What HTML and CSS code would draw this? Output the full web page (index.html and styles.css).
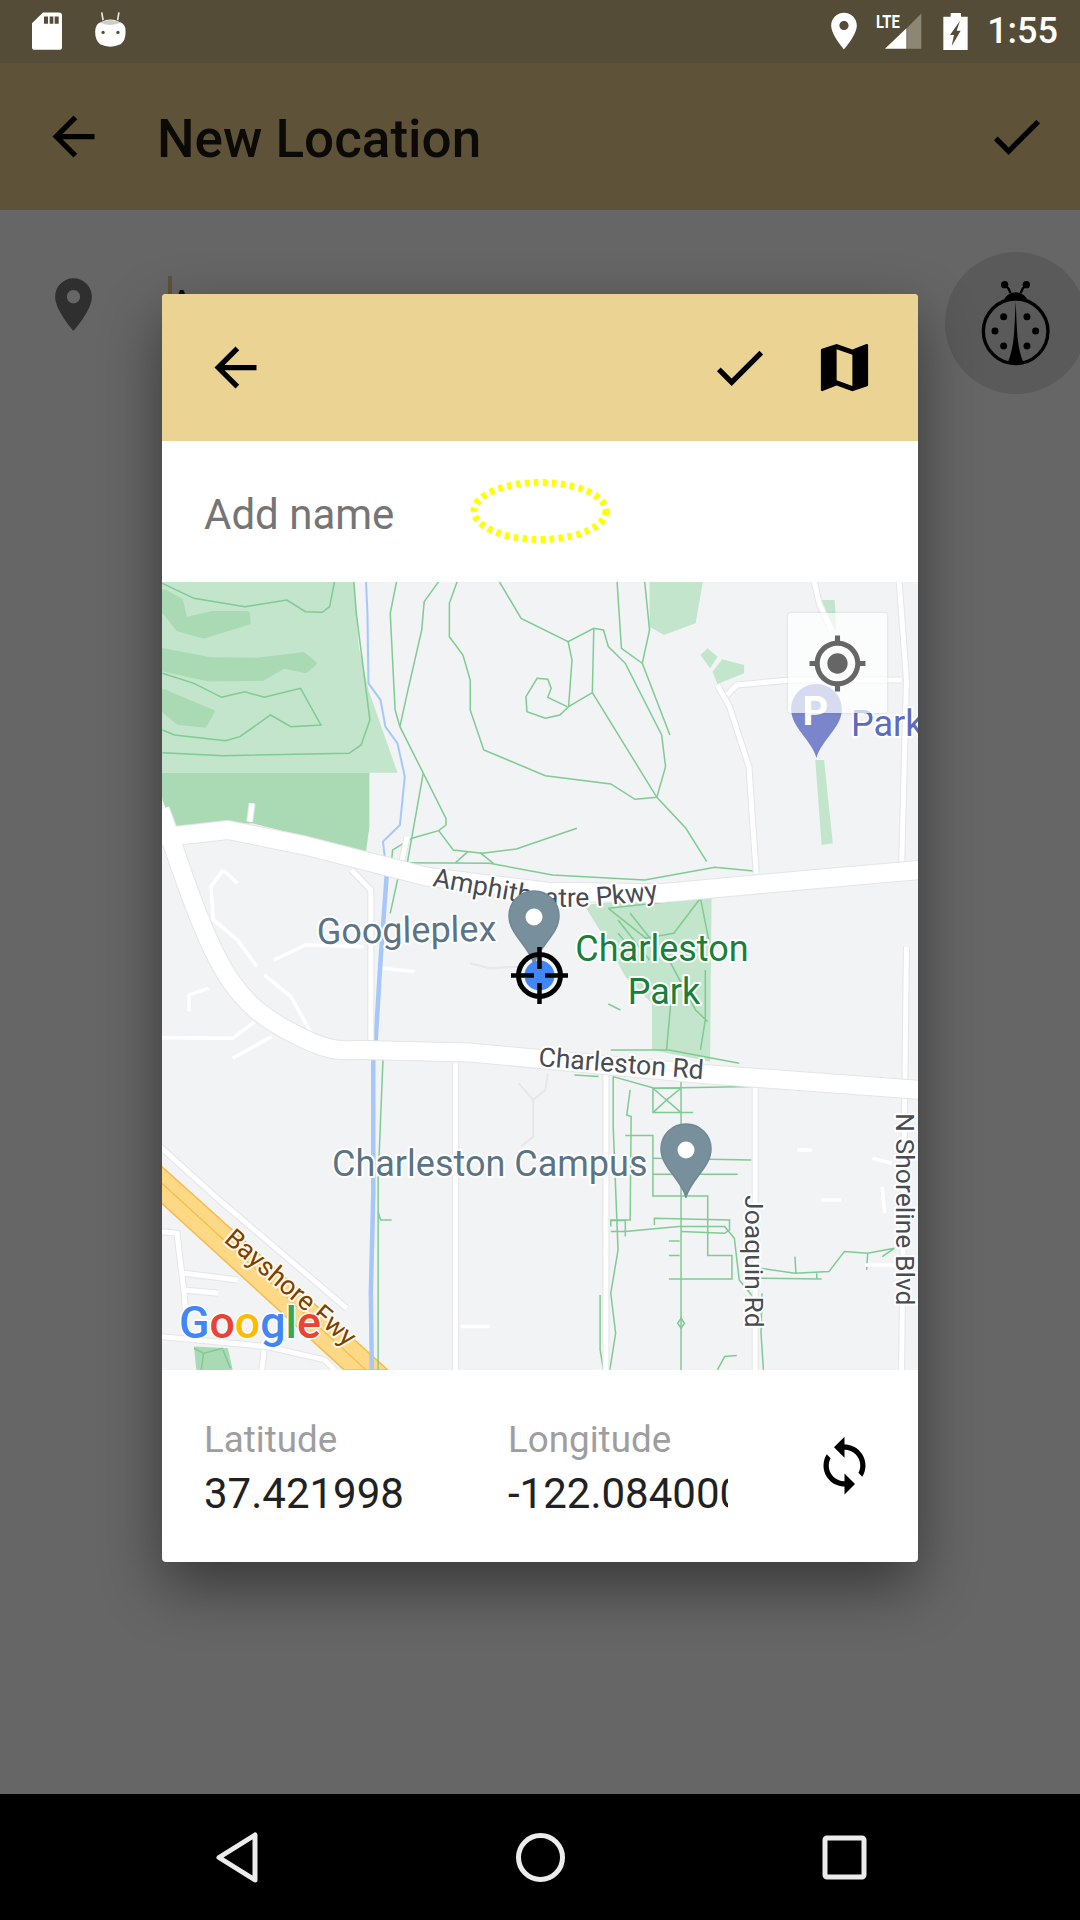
FILE: index.html
```html
<!DOCTYPE html>
<html lang="en">
<head>
<meta charset="utf-8">
<title>New Location</title>
<link rel="stylesheet" href="styles.css">
</head>
<body>
<div class="screen">
  <div class="statusbar">
    <svg class="st-sd" viewBox="97 37 90 113"><path fill="#fff" d="M130 38H178Q187 38 187 47V143Q187 150 178 150H105Q97 150 97 143V70Z"/><path fill="#544c36" d="M133 50h12v22h-12zM150 50h11v22h-11zM165 50h12v22h-12z"/></svg>
    <svg class="st-cat" viewBox="285 32 93 106"><path stroke="#e8e6e0" stroke-width="5" d="M305 33l4 24M357 33l-4 24"/><path fill="#fff" d="M305 62Q331 48 358 62Q378 66 377 92Q378 118 362 130Q331 144 300 130Q285 118 285 92Q285 66 305 62Z"/><path fill="#cfcdc5" d="M298 64Q331 48 364 64Q331 78 298 64Z"/><circle cx="309" cy="94" r="5" fill="#544c36"/><circle cx="354" cy="94" r="5" fill="#544c36"/></svg>
    <div class="st-right">
      <svg class="st-loc" viewBox="0 0 24 24"><path fill="#fff" d="M12 2C8.13 2 5 5.13 5 9c0 5.25 7 13 7 13s7-7.75 7-13c0-3.87-3.13-7-7-7zm0 9.5c-1.38 0-2.5-1.12-2.5-2.5s1.12-2.5 2.5-2.5 2.5 1.12 2.5 2.5-1.12 2.5-2.5 2.5z"/></svg>
      <svg class="st-sig" viewBox="225 36 142 114"><path fill="#fff" d="M255 147L320 85V147Z"/><path fill="#8c8675" d="M322 83L365 40V147H322Z"/><text class="st-lte" x="228" y="85" textLength="72" lengthAdjust="spacingAndGlyphs">LTE</text></svg>
      <svg class="st-bat" viewBox="430 37 73 111"><path fill="#fff" d="M452 37h31v11h20v100h-73V48h22z"/><path fill="#544c36" d="M480 60L450 103h12l-7 33 27-46h-12z"/></svg>
      <span class="st-time">1:55</span>
    </div>
  </div>

  <div class="main">
    <header class="appbar">
      <svg class="icon" viewBox="0 0 24 24"><path d="M20 11H7.83l5.59-5.59L12 4l-8 8 8 8 1.41-1.41L7.83 13H20v-2z"/></svg>
      <h1 class="appbar-title">New Location</h1>
      <svg class="icon" viewBox="0 0 24 24"><path d="M9 16.17L4.83 12l-1.42 1.41L9 19 21 7l-1.41-1.41z"/></svg>
    </header>
    <div class="form-row">
      <svg class="icon form-pin" viewBox="0 0 24 24"><path d="M12 2C8.13 2 5 5.13 5 9c0 5.25 7 13 7 13s7-7.75 7-13c0-3.87-3.13-7-7-7zm0 9.5c-1.38 0-2.5-1.12-2.5-2.5s1.12-2.5 2.5-2.5 2.5 1.12 2.5 2.5-1.12 2.5-2.5 2.5z"/></svg>
      <div class="form-field"><span class="cursor"></span><span class="field-text">A</span></div>
      <div class="bug-badge">
        <svg class="bug" viewBox="180 115 220 270">
          <circle cx="290" cy="275" r="97" fill="none" stroke="#000" stroke-width="10"/>
          <path d="M290 185C286 260 288 320 266 370Q290 382 314 370C292 320 294 260 290 185Z"/>
          <path d="M250 190Q262 158 290 158Q318 158 330 190Q290 170 250 190Z"/>
          <path d="M275 160Q270 145 257 135M305 160Q310 145 322 135" fill="none" stroke="#000" stroke-width="7"/>
          <circle cx="257" cy="135" r="11"/><circle cx="322" cy="135" r="11"/>
          <circle cx="254" cy="231" r="10.500"/><circle cx="324" cy="231" r="10.500"/><circle cx="228" cy="274" r="10.500"/><circle cx="350" cy="274" r="10.500"/><circle cx="254" cy="319" r="10.500"/><circle cx="324" cy="319" r="10.500"/>
        </svg>
      </div>
    </div>

    <div class="scrim">
      <section class="dialog">
        <div class="dlg-head">
          <svg class="icon" viewBox="0 0 24 24"><path d="M20 11H7.830l5.590-5.590L12 4l-8 8 8 8 1.410-1.410L7.830 13H20v-2z"/></svg>
          <svg class="icon dlg-check" viewBox="0 0 24 24"><path d="M9 16.170L4.830 12l-1.420 1.410L9 19 21 7l-1.410-1.410z"/></svg>
          <svg class="icon" viewBox="0 0 24 24"><path d="M20.500 3l-.16.03L15 5.100 9 3 3.360 4.900c-.21.07-.36.25-.36.48V20.500c0 .28.22.5.5.5l.16-.03L9 18.900l6 2.100 5.640-1.900c.21-.07.36-.25.36-.48V3.500c0-.28-.22-.5-.5-.5zM15 19l-6-2.110V5l6 2.110V19z"/></svg>
        </div>
        <div class="dlg-name">
          <span class="name-hint">Add name</span>
          <svg class="ellipse" viewBox="0 0 146 70"><ellipse cx="73" cy="35" rx="66" ry="28.500" fill="none" stroke="#ffff00" stroke-width="7" stroke-dasharray="4.500 4.500"/></svg>
        </div>
        <div class="map">
          <svg class="map-svg" viewBox="162 582 756 788" width="756" height="788">
            <defs>
              <symbol id="pin" viewBox="0 0 52 75"><path d="M26 1C12 1 1 12 1 26c0 18 20 30 25 48 5-18 25-30 25-48C51 12 40 1 26 1z"/></symbol>
              <path id="amph-path" d="M432 886L540 906Q600 910 680 895"/>
              <path id="rd-path" d="M538 1066L740 1082"/>
              <path id="fwy-path" d="M223 1241L372 1369"/>
              <path id="joaq-path" d="M745 1195L745 1369"/>
              <path id="shore-path" d="M896 1113L896 1369"/>
              <g id="minor-roads">
                <path d="M190 670L185 725M510 770L498 850"/>
                <path d="M1150 315L1175 380L1215 560L1230 880"/>
                <path d="M1170 345L1190 315L1300 300L1530 300"/>
                <path d="M1525 5L1540 300L1530 860"/>
                <path d="M1350 5L1360 70L1385 150"/>
                <path d="M395 870L435 930V1380"/>
                <path d="M610 1450V2370M920 1485V2370M1228 1520V2370"/>
                <path d="M0 1700L130 1870L385 2185"/>
                <path d="M1540 1100L1530 2370"/>
                <path d="M0 1955L35 1960L50 2140L55 2260M50 2080L160 2100M50 2130L120 2140"/>
                <path d="M0 2270L220 2300L340 2340L360 2370M215 2310L210 2370"/>
              </g>
            </defs>
            <rect class="m-land" x="162" y="582" width="756" height="788"/>
            <g transform="translate(160 580) scale(.4847 .3333)">
              <path class="g-light" d="M0 5H400L410 200L430 330L490 578H0Z"/>
              <path class="g-light" d="M1010 5H1120L1105 130L1040 165L1010 140Z"/>
              <path class="g-light" d="M1115 225L1130 205L1150 230L1135 265ZM1160 238L1205 255V280L1150 312L1140 275Z"/>
              <path class="g-light" d="M1352 540H1370L1388 790L1365 795ZM1365 60H1392L1395 150L1385 130Z"/>
              <path class="g-dark" d="M0 578H432V740L425 815L190 730L30 745L5 660Z"/>
              <path class="g-dark g-blob" d="M8 35L40 60L50 120L110 100L178 100L180 128L90 168L40 148L8 90Z"/>
              <path class="g-dark g-blob" d="M8 212L100 238L200 240L295 224L316 250L300 272L255 258L210 296L100 297L8 268Z"/>
              <path class="g-dark g-blob" d="M8 335L106 395L90 436L40 428L8 390Z"/>
              <path class="g-light" d="M875 975L1138 935L1135 1445L1015 1410V1270L960 1190L920 1080Z"/>
              <path class="g-dark" d="M70 2300L140 2305L150 2370H75Z"/>

              <path class="fwy" d="M0 1755L470 2370H380L0 1865Z"/>
              <path class="fwy-line" d="M0 1805L425 2370"/>

              <g class="green">
                <path d="M5 10L70 55L175 80L262 60L300 95L335 97L350 80L360 5"/>
                <path d="M5 280L70 310L127 352L175 335L215 352L290 325L332 435L270 440L228 405L165 470L135 482L30 465L5 450"/>
                <path d="M5 518L130 527L390 520L415 495L433 420L405 100L400 5"/>
                <path d="M488 5L475 100L485 390L495 440L590 715V735L575 752L520 775L480 810L475 880"/>
                <path d="M575 5L545 65L540 150L510 340L495 440"/>
                <path d="M613 5L597 70V170L625 225L640 300V390L668 510L795 587L930 612L980 658L1025 652L1043 560L1035 465L960 250L925 200L915 150L895 145L842 185L745 115L700 5"/>
                <path d="M842 185L850 240L843 380"/>
                <path d="M895 145L892 338L843 380L825 405L795 415L757 395L755 350L778 295L800 298L807 325L800 352L840 380"/>
                <path d="M892 338L1025 652L1085 745L1128 845"/>
                <path d="M943 5L952 205L995 250L1010 150L1000 5"/>
                <path d="M995 250L1052 465"/>
                <path d="M543 580L510 850"/>
                <path d="M575 752L605 810L665 820L735 807L860 745"/>
                <path d="M510 848L680 850L810 885L1000 900L1145 862L1225 873"/>
                <path d="M635 815L610 848M660 818L688 850"/>
                <path d="M475 1000L490 900L515 870"/>
                <path d="M925 985L1115 955L1060 1060L1000 1075M925 985L1050 1130M945 1020L1010 1140M1115 955L1135 1100M970 1000L1030 1110M945 1060L985 1130"/>
                <path d="M1050 1140L1105 1290L1130 1325M1125 1170V1320L1115 1410M1055 1250L1045 1410M930 1410H1050L1195 1450"/>
                <path d="M855 1485L905 1490M935 1490L1020 1525L1220 1520"/>
                <path d="M1017 1525H1075V1598H1017ZM1017 1525L1045 1560L1075 1525M1017 1598L1045 1560L1075 1598M1075 1598H1100M1075 1480V2370"/>
                <path d="M960 1667H1017V1848H1130V2027H1180V2097H1050"/>
                <path d="M1017 1735L1220 1740M1017 1783L1192 1783"/>
                <path d="M970 1530L963 1605L972 1610L970 1920H930V1940"/>
                <path d="M930 1922H960V1970M930 1955H960L1070 1940H1165L1185 1975L1195 2100L1240 2180"/>
                <path d="M1020 1935V1915L1175 1920V1950L1165 1960L1075 1955"/>
                <path d="M1050 1983H1072M1050 2027H1072"/>
                <path d="M1240 2065L1310 2080L1380 2075L1412 2015L1460 2020L1515 2005L1490 2030M1240 2095L1365 2097M1310 2030L1312 2080M1460 2020L1458 2070M1355 2080V2097"/>
                <path d="M935 1490V1640L945 2010L930 2140L940 2260L928 2370M908 2145V2310L915 2370"/>
                <path d="M1242 2140L1240 2260L1245 2370"/>
                <path d="M1150 2370L1165 2330L1190 2327M1075 2215L1082 2230L1075 2245L1068 2230Z"/>
                <path d="M450 1895L455 1920H478"/>
                <path d="M925 1272L950 1290"/>
                <path d="M460 1440L450 1800V2370"/>
                <path d="M70 2305L90 2320L130 2305M90 2320L85 2370M130 2310L145 2365"/>
              </g>
              <path class="stream-top" d="M425 5L428 100L430 310L455 360L465 440L490 490L505 590L495 735L460 785L468 880"/>
              <path class="stream" d="M468 880L462 1000L455 1140L445 1380L440 1440V1840L435 2140L437 2370"/>

              <use href="#minor-roads" class="road-sm-case"/>
              <use href="#minor-roads" class="road-sm"/>
              <g class="road-xs">
                <path d="M130 870L105 920L110 1020L160 1080L200 1160M130 870L160 910"/>
                <path d="M235 1140L300 1095L420 1100M460 1165L525 1175"/>
                <path d="M0 1373L150 1375L195 1325M150 1435L230 1370M215 1185L270 1250L310 1355M60 1295V1245L100 1225"/>
                <path d="M620 2240H680M1315 1710H1345M1365 1860H1405M1470 1735L1510 1750M1490 1820L1495 1900M1455 2055H1530"/>
              </g>
              <path class="road-case" d="M0 690C30 800 70 1000 120 1140S230 1330 295 1375S380 1410 420 1410L640 1418L940 1458L1120 1482L1568 1530"/>
              <path class="road-case" d="M0 770L30 768L140 750L300 797L550 890L800 935L1033 940L1240 912L1568 870"/>
              <path class="road-lg" d="M0 690C30 800 70 1000 120 1140S230 1330 295 1375S380 1410 420 1410L640 1418L940 1458L1120 1482L1568 1530"/>
              <path class="road-lg" d="M0 770L30 768L140 750L300 797L550 890L800 935L1033 940L1240 912L1568 870"/>
              <path class="faint" d="M740 1510L770 1560V1670L745 1700M800 1480L795 1530L770 1560M640 1150L680 1165L740 1160"/>
            </g>

            <use href="#pin" class="pin-p" x="790" y="683" width="53" height="76"/>
            <text class="lbl lbl-p" x="815.500" y="725" text-anchor="middle">P</text>
            <text class="lbl lbl-blue" x="851" y="736">Park</text>

            <text class="lbl lbl-road"><textPath href="#amph-path">Amphitheatre Pkwy</textPath></text>
            <text class="lbl lbl-road"><textPath href="#rd-path">Charleston Rd</textPath></text>
            <text class="lbl lbl-road"><textPath href="#joaq-path">Joaquin Rd</textPath></text>
            <text class="lbl lbl-road"><textPath href="#shore-path">N Shoreline Blvd</textPath></text>
            <text class="lbl lbl-fwy"><textPath href="#fwy-path">Bayshore Fwy</textPath></text>
            <text class="lbl lbl-poi" x="317" y="944" transform="rotate(-1 317 944)">Googleplex</text>
            <text class="lbl lbl-poi" x="332" y="1176">Charleston Campus</text>
            <text class="lbl lbl-green" x="662" y="961" text-anchor="middle"><tspan x="662">Charleston</tspan><tspan x="664" dy="43">Park</tspan></text>

            <use href="#pin" class="pin-grey" x="508" y="890" width="52" height="75"/>
            <circle cx="534" cy="917" r="8.500" fill="#fff"/>
            <use href="#pin" class="pin-grey" x="660" y="1123" width="52" height="75"/>
            <circle cx="686" cy="1150" r="8.500" fill="#fff"/>

            <circle cx="539.500" cy="975.500" r="15" fill="#4285f4"/>
            <circle cx="539.500" cy="975.500" r="21" fill="none" stroke="#000" stroke-width="5"/>
            <path d="M511 975.500h23M545 975.500h23M539.500 947v22M539.500 983v21" stroke="#000" stroke-width="4.500" fill="none"/>

            <text class="g-logo" x="179" y="1338" textLength="142" lengthAdjust="spacingAndGlyphs"><tspan fill="#4285f4">G</tspan><tspan fill="#ea4335">o</tspan><tspan fill="#fbbc05">o</tspan><tspan fill="#4285f4">g</tspan><tspan fill="#34a853">l</tspan><tspan fill="#ea4335">e</tspan></text>
          </svg>
          <div class="loc-btn">
            <svg class="loc-icon" viewBox="0 0 24 24"><path d="M12 8c-2.210 0-4 1.790-4 4s1.790 4 4 4 4-1.790 4-4-1.790-4-4-4zm8.940 3c-.46-4.170-3.770-7.480-7.940-7.940V1h-2v2.060C6.830 3.520 3.520 6.830 3.060 11H1v2h2.060c.46 4.170 3.770 7.480 7.940 7.940V23h2v-2.060c4.170-.46 7.480-3.770 7.940-7.940H23v-2h-2.060zM12 19c-3.870 0-7-3.130-7-7s3.130-7 7-7 7 3.130 7 7-3.130 7-7 7z"/></svg>
          </div>
        </div>
        <div class="dlg-foot">
          <div class="coord coord-lat"><span class="coord-label">Latitude</span><span class="coord-value">37.421998</span></div>
          <div class="coord coord-lng"><span class="coord-label">Longitude</span><span class="coord-value">-122.084000</span></div>
          <svg class="icon sync" viewBox="0 0 24 24"><path d="M12 4V1L8 5l4 4V6c3.310 0 6 2.690 6 6 0 1.010-.25 1.970-.7 2.800l1.460 1.460C19.540 15.030 20 13.570 20 12c0-4.420-3.580-8-8-8zm0 14c-3.310 0-6-2.690-6-6 0-1.010.25-1.970.7-2.800L5.240 7.740C4.460 8.970 4 10.430 4 12c0 4.420 3.580 8 8 8v3l4-4-4-4v3z"/></svg>
        </div>
      </section>
    </div>
  </div>

  <nav class="navbar">
    <svg class="nav-ico" viewBox="0 0 63 63"><path d="M50 9V54L14 31.500Z"/></svg>
    <svg class="nav-ico" viewBox="0 0 63 63"><circle cx="31.500" cy="31.500" r="22"/></svg>
    <svg class="nav-ico" viewBox="0 0 63 63"><rect x="12" y="12" width="39" height="39" rx="2"/></svg>
  </nav>
</div>
</body>
</html>
```

FILE: styles.css
```css
* { box-sizing: border-box; }
html, body { margin: 0; padding: 0; background: #000; }
.screen {
  width: 1080px; height: 1920px; overflow: hidden;
  display: flex; flex-direction: column;
  font-family: Roboto, "Liberation Sans", sans-serif;
}

/* status bar */
.statusbar { height: 63px; flex: none; background: #544c36; display: flex; align-items: center; padding: 0 22px 0 32px; }
.st-sd { width: 30px; height: 38px; margin-top: -1px; }
.st-cat { width: 31px; height: 35px; margin: -5px 0 0 33px; }
.st-right { margin-left: auto; display: flex; align-items: center; }
.st-loc { width: 44px; height: 44px; margin-top: -2px; }
.st-sig { width: 47px; height: 38px; margin: -1px 0 0 9px; }
.st-lte { font: 700 58px Roboto, sans-serif; fill: #fff; }
.st-bat { width: 25px; height: 37px; margin: -1px 0 0 21px; }
.st-time { font-size: 36px; font-weight: 500; color: #fff; margin-left: 19px; line-height: 63px; }

/* page under the dialog */
.main { position: relative; flex: 1; background: #fff; }
.icon { width: 63px; height: 63px; flex: none; display: block; fill: #000; }
.appbar { height: 147px; background: #ebcf8f; display: flex; align-items: center; padding: 0 32px 0 42px; }
.appbar-title { flex: 1; margin: 6px 0 0 52px; font-size: 53px; font-weight: 500; color: rgba(0, 0, 0, .87); line-height: 1; }
.form-row { display: flex; align-items: flex-start; padding: 42px 0 0 42px; }
.form-pin { margin-top: 21px; fill: #757575; }
.form-field { position: relative; flex: 1; margin-left: 63px; height: 60px; margin-top: 24px; }
.cursor { position: absolute; left: 0; top: 0; width: 4px; height: 60px; background: #ebcf8f; }
.field-text { position: absolute; left: 0; top: 5px; font-size: 42px; color: #212121; line-height: 49px; }
.bug-badge { width: 142px; height: 142px; flex: none; margin-right: -7px; border-radius: 50%; background: rgba(0, 0, 0, .12); display: flex; align-items: center; justify-content: center; }
.bug { width: 73.300px; height: 90px; fill: #000; }

/* dialog */
.scrim { position: absolute; inset: 0; padding-bottom: 1px; background: rgba(0, 0, 0, .6); display: flex; align-items: center; justify-content: center; }
.dialog { width: 756px; height: 1268px; border-radius: 4px; overflow: hidden; background: #fff; display: flex; flex-direction: column; box-shadow: 0 24px 60px rgba(0, 0, 0, .45); }
.dlg-head { height: 147px; flex: none; background: #ead393; display: flex; align-items: center; padding: 0 42px; gap: 42px; }
.dlg-check { margin-left: auto; }
.dlg-name { position: relative; height: 141px; flex: none; display: flex; align-items: center; padding: 0 0 0 42px; }
.name-hint { font-size: 42px; color: #757575; margin-top: 5px; }
.ellipse { position: absolute; left: 305px; top: 35px; width: 146px; height: 70px; }

/* map */
.map { position: relative; height: 788px; flex: none; overflow: hidden; }
.map-svg { display: block; }
.m-land { fill: #f1f3f4; }
.g-light { fill: #c2e5cb; }
.g-dark { fill: #a9dab4; }
.g-blob { stroke: #a9dab4; stroke-width: 14; stroke-linejoin: round; }
.green path, .stream, .stream-top, #minor-roads path, .road-xs path, .road-lg, .road-case, .fwy, .fwy-line, .faint { vector-effect: non-scaling-stroke; fill: none; }
.green path { stroke: #7fcb93; stroke-width: 1.500px; }
.stream-top { stroke: #a7c7fb; stroke-width: 2px; }
.stream { stroke: #a7c7fb; stroke-width: 4.500px; }
.road-sm-case { stroke: #e3e5e8; stroke-width: 7px; }
.road-sm { stroke: #fff; stroke-width: 5px; }
.road-xs path { stroke: #fff; stroke-width: 3.500px; }
.road-lg { stroke: #fff; stroke-width: 18px; stroke-linejoin: round; }
.road-case { stroke: #e3e5e8; stroke-width: 20px; stroke-linejoin: round; }
.faint { stroke: #e6e7ea; stroke-width: 2px; }
.fwy { fill: #fdd986; stroke: #f6bb4f; stroke-width: 1.500px; }
.fwy-line { stroke: #f6bb4f; stroke-width: 1.200px; }
.lbl { font-family: Roboto, sans-serif; paint-order: stroke; stroke: #fff; stroke-width: 4px; stroke-linejoin: round; }
.lbl-road { font-size: 26.500px; fill: #474b52; }
.lbl-fwy { font-size: 26.500px; fill: #7b3f00; stroke: #fff8e8; }
.lbl-poi { font-size: 36px; fill: #5b7485; }
.lbl-green { font-size: 36px; fill: #188038; }
.lbl-blue { font-size: 36px; fill: #5c6bc0; }
.lbl-p { font-size: 40px; font-weight: 700; fill: #fff; stroke: none; }
.pin-grey { fill: #78909c; stroke: #6f8797; stroke-width: 1.500px; }
.pin-p { fill: #7986cb; }
.g-logo { font-family: Roboto, sans-serif; font-size: 44px; font-weight: 500; paint-order: stroke; stroke: #fff; stroke-width: 3px; stroke-linejoin: round; }
.loc-btn { position: absolute; left: 626px; top: 31px; width: 99px; height: 100px; border-radius: 3px; background: rgba(255, 255, 255, .7); box-shadow: 0 0 3px rgba(0, 0, 0, .12); display: flex; align-items: center; justify-content: center; }
.loc-icon { width: 61px; height: 61px; fill: #666; }

/* footer */
.dlg-foot { flex: 1; display: flex; align-items: flex-start; padding: 48px 0 0 42px; }
.coord { display: flex; flex-direction: column; overflow: hidden; white-space: nowrap; }
.coord-lat { width: 304px; }
.coord-lng { width: 220px; }
.coord-label { font-size: 36.750px; line-height: 43px; color: #9e9e9e; }
.coord-value { font-size: 42px; line-height: 56px; color: #212121; margin-top: 5px; }
.sync { margin: 16px 0 0 85px; }

/* navigation bar */
.navbar { height: 126px; flex: none; background: #000; display: grid; grid-template-columns: repeat(3, 304px); padding: 0 0 0 84px; align-items: center; justify-items: center; }
.nav-ico { width: 63px; height: 63px; fill: none; stroke: #ececec; stroke-width: 5px; stroke-linejoin: round; }
```
